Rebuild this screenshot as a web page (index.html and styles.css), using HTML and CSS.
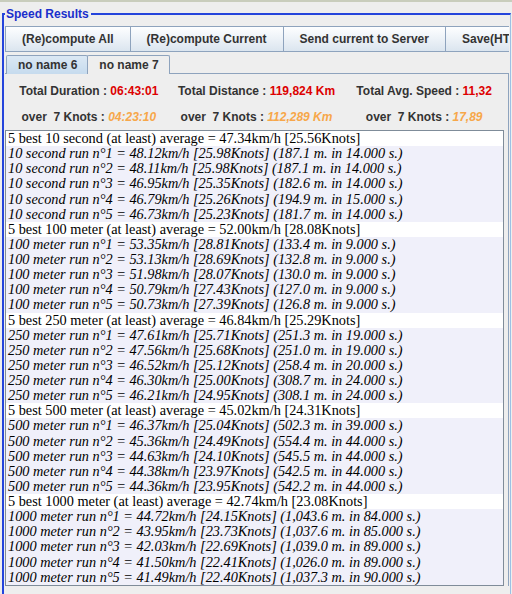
FILE: index.html
```html
<!DOCTYPE html>
<html>
<head>
<meta charset="utf-8">
<title>Speed Results</title>
<link rel="stylesheet" href="styles.css">
</head>
<body>
<fieldset class="results">
  <legend class="results-title">Speed Results</legend>
  <div class="toolbar">
    <button class="tool-btn">(Re)compute All</button>
    <button class="tool-btn">(Re)compute Current</button>
    <button class="tool-btn">Send current to Server</button>
    <button class="tool-btn">Save(HTML)...</button>
  </div>
  <div class="tabs">
    <div class="tab tab-active">no name 6</div>
    <div class="tab">no name 7</div>
  </div>
  <div class="tab-panel">
    <div class="stats">
      <div class="stat">Total Duration : <span class="val">06:43:01</span></div>
      <div class="stat">Total Distance : <span class="val">119,824 Km</span></div>
      <div class="stat">Total Avg. Speed : <span class="val">11,32</span></div>
      <div class="stat">over&nbsp; 7 Knots : <span class="val-over">04:23:10</span></div>
      <div class="stat">over&nbsp; 7 Knots : <span class="val-over">112,289 Km</span></div>
      <div class="stat">over&nbsp; 7 Knots : <span class="val-over">17,89</span></div>
    </div>
    <div class="report">
      <div class="line head">5 best 10 second (at least) average = 47.34km/h [25.56Knots]</div>
      <div class="line run">10 second run n°1 = 48.12km/h [25.98Knots] (187.1 m. in 14.000 s.)</div>
      <div class="line run">10 second run n°2 = 48.11km/h [25.98Knots] (187.1 m. in 14.000 s.)</div>
      <div class="line run">10 second run n°3 = 46.95km/h [25.35Knots] (182.6 m. in 14.000 s.)</div>
      <div class="line run">10 second run n°4 = 46.79km/h [25.26Knots] (194.9 m. in 15.000 s.)</div>
      <div class="line run">10 second run n°5 = 46.73km/h [25.23Knots] (181.7 m. in 14.000 s.)</div>
      <div class="line head">5 best 100 meter (at least) average = 52.00km/h [28.08Knots]</div>
      <div class="line run">100 meter run n°1 = 53.35km/h [28.81Knots] (133.4 m. in 9.000 s.)</div>
      <div class="line run">100 meter run n°2 = 53.13km/h [28.69Knots] (132.8 m. in 9.000 s.)</div>
      <div class="line run">100 meter run n°3 = 51.98km/h [28.07Knots] (130.0 m. in 9.000 s.)</div>
      <div class="line run">100 meter run n°4 = 50.79km/h [27.43Knots] (127.0 m. in 9.000 s.)</div>
      <div class="line run">100 meter run n°5 = 50.73km/h [27.39Knots] (126.8 m. in 9.000 s.)</div>
      <div class="line head">5 best 250 meter (at least) average = 46.84km/h [25.29Knots]</div>
      <div class="line run">250 meter run n°1 = 47.61km/h [25.71Knots] (251.3 m. in 19.000 s.)</div>
      <div class="line run">250 meter run n°2 = 47.56km/h [25.68Knots] (251.0 m. in 19.000 s.)</div>
      <div class="line run">250 meter run n°3 = 46.52km/h [25.12Knots] (258.4 m. in 20.000 s.)</div>
      <div class="line run">250 meter run n°4 = 46.30km/h [25.00Knots] (308.7 m. in 24.000 s.)</div>
      <div class="line run">250 meter run n°5 = 46.21km/h [24.95Knots] (308.1 m. in 24.000 s.)</div>
      <div class="line head">5 best 500 meter (at least) average = 45.02km/h [24.31Knots]</div>
      <div class="line run">500 meter run n°1 = 46.37km/h [25.04Knots] (502.3 m. in 39.000 s.)</div>
      <div class="line run">500 meter run n°2 = 45.36km/h [24.49Knots] (554.4 m. in 44.000 s.)</div>
      <div class="line run">500 meter run n°3 = 44.63km/h [24.10Knots] (545.5 m. in 44.000 s.)</div>
      <div class="line run">500 meter run n°4 = 44.38km/h [23.97Knots] (542.5 m. in 44.000 s.)</div>
      <div class="line run">500 meter run n°5 = 44.36km/h [23.95Knots] (542.2 m. in 44.000 s.)</div>
      <div class="line head">5 best 1000 meter (at least) average = 42.74km/h [23.08Knots]</div>
      <div class="line run">1000 meter run n°1 = 44.72km/h [24.15Knots] (1,043.6 m. in 84.000 s.)</div>
      <div class="line run">1000 meter run n°2 = 43.95km/h [23.73Knots] (1,037.6 m. in 85.000 s.)</div>
      <div class="line run">1000 meter run n°3 = 42.03km/h [22.69Knots] (1,039.0 m. in 89.000 s.)</div>
      <div class="line run">1000 meter run n°4 = 41.50km/h [22.41Knots] (1,026.0 m. in 89.000 s.)</div>
      <div class="line run">1000 meter run n°5 = 41.49km/h [22.40Knots] (1,037.3 m. in 90.000 s.)</div>
    </div>
  </div>
</fieldset>
</body>
</html>
```

FILE: styles.css
```css
html, body {
  margin: 0;
  padding: 0;
  background: #eeeeee;
  overflow: hidden;
}

body {
  border-top: 2px solid #c9cdbd;
  height: 592px;
  font-family: "Liberation Sans", Arial, sans-serif;
  color: #333333;
}

.results {
  margin: 5px 1px 0 2px;
  padding: 5px 1px 0 1px;
  border: 2px solid #2444dc;
  border-right: 1px solid #9cc0e4;
  height: 600px;
  min-width: 0;
}

.results-title {
  padding: 0 2px 0 1px;
  margin-left: 0;
  font-weight: bold;
  font-size: 12px;
  line-height: 14px;
  color: #1a2fcc;
}

.toolbar {
  display: flex;
  height: 26px;
  overflow: hidden;
}

.tool-btn {
  flex: 0 0 auto;
  height: 26px;
  margin: 0;
  padding: 0 16px;
  border: 1px solid #8ea3bd;
  margin-right: -1px;
  background: linear-gradient(#fdfeff 0%, #eef3f8 45%, #dbe5ef 100%);
  font-family: "Liberation Sans", Arial, sans-serif;
  font-weight: bold;
  font-size: 12px;
  color: #333333;
}

.tabs {
  display: flex;
  margin-top: 3px;
  padding-left: 1px;
  height: 18px;
}

.tab {
  padding: 0 10px 0 11px;
  height: 18px;
  line-height: 18px;
  border: 1px solid #8ea3bd;
  border-bottom: none;
  margin-right: -1px;
  font-weight: bold;
  font-size: 12px;
  color: #333333;
  background: #eeeeee;
  border-radius: 2px 2px 0 0;
}

.tab-active {
  background: linear-gradient(#dbe8f4, #c6dbee);
}

.tab-panel {
  border-top: 1px solid #8ea3bd;
  border-right: 1px solid #8ea3bd;
  margin-right: 0;
}

.stats {
  display: grid;
  grid-template-columns: 1fr 1fr 1fr;
  grid-auto-rows: 26px;
  padding-top: 4px;
  height: 52px;
  font-weight: bold;
  font-size: 12px;
  line-height: 26px;
}

.stat {
  text-align: center;
  white-space: nowrap;
}

.val {
  color: #dd0000;
}

.val-over {
  color: #f7a74a;
  font-style: italic;
}

.report {
  margin-right: 4px;
  border: 1px solid #7f8c99;
  background: #ffffff;
  font-family: "Liberation Serif", "Times New Roman", serif;
  font-size: 14.3px;
  color: #000000;
}

.line {
  height: 15.14px;
  line-height: 15.14px;
  padding-left: 2px;
  white-space: nowrap;
  overflow: hidden;
}

.run {
  background: #f0f0fa;
  font-style: italic;
}
```
